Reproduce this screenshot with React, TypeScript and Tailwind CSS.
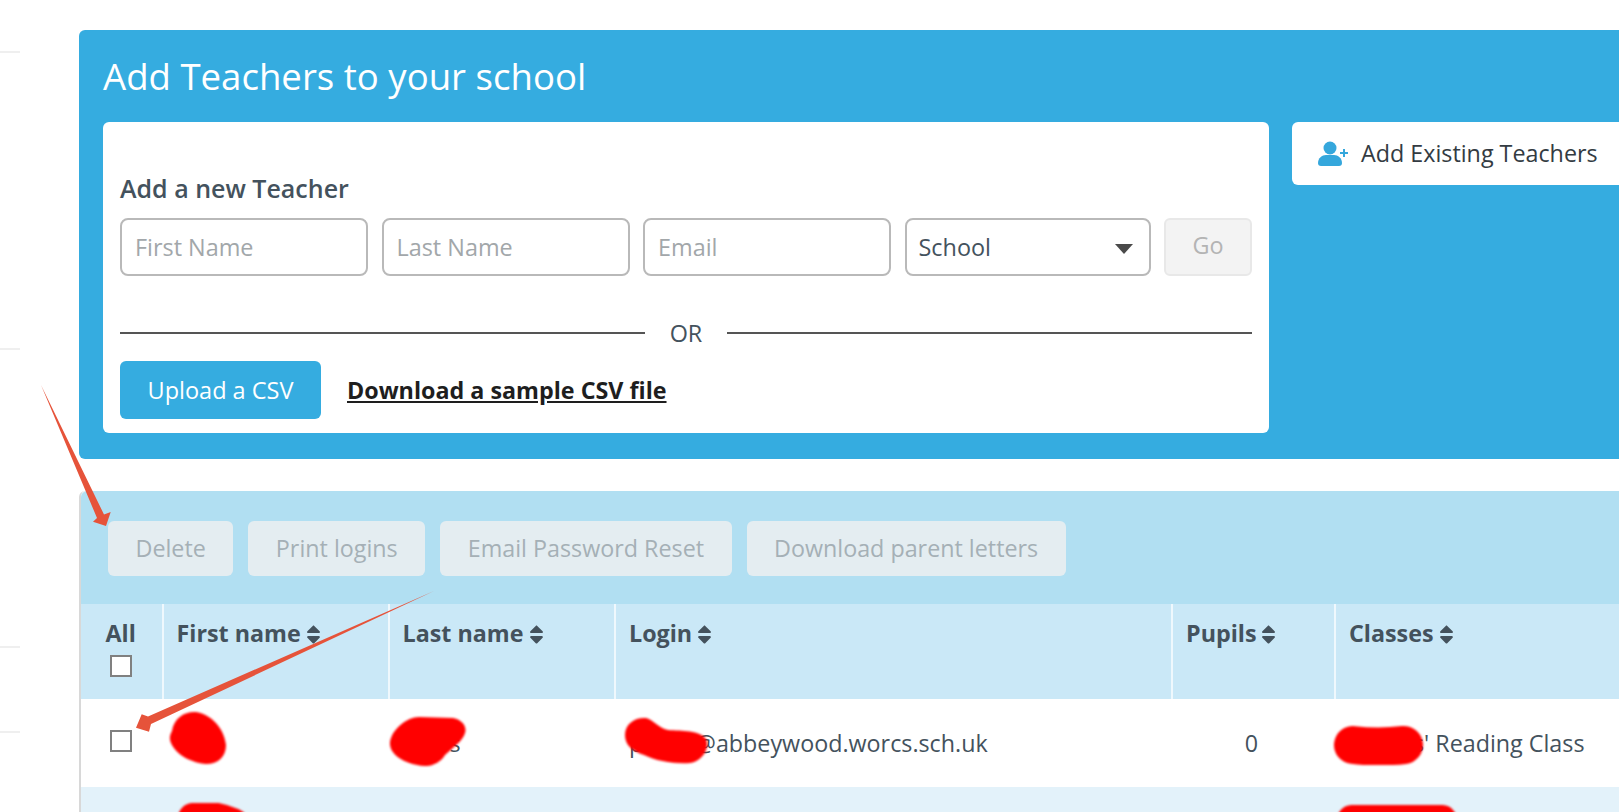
import { FaSort } from "react-icons/fa"

const columns = [
  { label: "First name", width: "w-[226px]" },
  { label: "Last name", width: "w-[226.5px]" },
  { label: "Login", width: "w-[557px]" },
  { label: "Pupils", width: "w-[163px]" },
  { label: "Classes", width: "flex-1" },
]

function TextField({ placeholder }: { placeholder: string }) {
  return (
    <input
      placeholder={placeholder}
      className="h-[58px] w-[248px] rounded-lg border-2 border-[#b9b9b9] bg-white px-[13px] text-[23.4px] outline-none placeholder:text-[#a2a7aa]"
    />
  )
}

function ToolButton({ label }: { label: string }) {
  return (
    <button className="h-[55px] rounded-md bg-[#e4edf1] px-[27.5px] text-[23.3px] text-[#a5b0b6]">
      {label}
    </button>
  )
}

function Checkbox() {
  return <div className="h-[22px] w-[22px] border-2 border-[#808080] bg-white" />
}

// scribbled-out names, drawn on top of the table text
function Blob({ className, d, w, h }: { className: string, d: string, w: number, h: number }) {
  return (
    <svg viewBox={`0 0 ${w} ${h}`} width={w} height={h} className={`absolute blur-[1px] ${className}`}>
      <path d={d} fill="#ff0000" />
    </svg>
  )
}

function Stroke({ className, d, w, h, sw }: { className: string, d: string, w: number, h: number, sw: number }) {
  return (
    <svg viewBox={`0 0 ${w} ${h}`} width={w} height={h} className={`absolute blur-[1px] ${className}`}>
      <path d={d} fill="none" stroke="#ff0000" strokeWidth={sw} strokeLinecap="round" />
    </svg>
  )
}

export default function App() {
  return (
    <div className="relative flex h-screen w-full overflow-hidden bg-white font-['Open_Sans',sans-serif] text-[#44525d]">
      <aside className="w-[20px] shrink-0">
        <div className="mt-[51px] h-[2px] bg-[#efefef]" />
        <div className="mt-[295px] h-[2px] bg-[#efefef]" />
        <div className="mt-[296px] h-[2px] bg-[#efefef]" />
        <div className="mt-[83px] h-[2px] bg-[#efefef]" />
      </aside>

      <main className="ml-[58.5px] w-[1600px] shrink-0 pt-[30px]">
        <section className="rounded-l-md bg-[#35acE0] pb-[26px] pl-[24.5px]">
          <h1 className="flex h-[92px] items-center text-[36.6px] text-white">Add Teachers to your school</h1>
          <div className="flex items-start gap-[23px]">
            <div className="w-[1166px] rounded-md bg-white px-[17px] pt-[48px] pb-[14px]">
              <h2 className="h-[37px] text-[25px] leading-[36px] font-semibold">Add a new Teacher</h2>
              <div className="mt-[11px] flex gap-[13.5px]">
                <TextField placeholder="First Name" />
                <TextField placeholder="Last Name" />
                <TextField placeholder="Email" />
                <div className="flex h-[58px] w-[246px] items-center justify-between rounded-lg border-2 border-[#b9b9b9] pr-[16px] pl-[12px] text-[23.4px]">
                  <span className="pt-[1px]">School</span>
                  <svg viewBox="0 0 18 10" width={18} height={10} className="mt-[3px]">
                    <polygon points="0,0 18,0 9,10" fill="#4a4a4a" />
                  </svg>
                </div>
                <button className="h-[58px] w-[88px] rounded-md border-2 border-[#e8e8e8] bg-[#f3f3f3] pb-[2px] text-[23.4px] text-[#b4b4b4]">Go</button>
              </div>
              <div className="mt-[45px] flex h-[24px] items-center">
                <div className="h-[2px] w-[525px] bg-[#555555]" />
                <span className="w-[82px] pt-[1px] text-center text-[23.4px]">OR</span>
                <div className="h-[2px] flex-1 bg-[#555555]" />
              </div>
              <div className="mt-[16px] flex items-center gap-[26px]">
                <button className="h-[58px] w-[201px] rounded-md bg-[#35acE0] pt-[1px] text-[23.5px] text-white">Upload a CSV</button>
                <a className="pt-[1px] text-[23.3px] font-bold text-[#1e1e1e] underline">Download a sample CSV file</a>
              </div>
            </div>
            <div className="flex h-[63px] flex-1 items-center gap-[12px] rounded-l-md bg-white pl-[26px] text-[23.3px] text-[#333b42]">
              <svg viewBox="0 0 31 25" width={31} height={25} fill="#35a7dc">
                <circle cx="12" cy="7" r="6.5" />
                <path d="M0,22 C0,17 4,14 8,14 L16,14 C20,14 24,17 24,22 C24,24 23,25 21,25 L3,25 C1,25 0,24 0,22Z" />
                <path d="M25,8 h2 v3 h3 v2 h-3 v3 h-2 v-3 h-3 v-2 h3z" />
              </svg>
              Add Existing Teachers
            </div>
          </div>
        </section>

        <section className="mt-[32px] rounded-tl-md border-l-2 border-[#d8d8d8]">
          <div className="flex h-[113px] gap-[15px] rounded-tl-md bg-[#b1dff2] pt-[30px] pl-[27.5px]">
            <ToolButton label="Delete" />
            <ToolButton label="Print logins" />
            <ToolButton label="Email Password Reset" />
            <ToolButton label="Download parent letters" />
          </div>

          <div className="flex h-[95px] bg-[#cae8f7] text-[23.3px] font-bold">
            <div className="flex w-[83px] shrink-0 flex-col items-start border-r-2 border-white/70 pt-[12px] pl-[25px]">
              All
              <div className="mt-[4px] ml-[4.5px]"><Checkbox /></div>
            </div>
            {columns.map((col) => (
              <div key={col.label} className={`flex shrink-0 items-start gap-[5px] border-r-2 border-white/70 pt-[12px] pl-[13px] last:border-r-0 ${col.width}`}>
                {col.label}
                <FaSort className="mt-[7px] h-[23px] w-[15px] text-[#44525d]" />
              </div>
            ))}
          </div>

          <div className="relative flex h-[88px] items-center bg-white text-[23.3px]">
            <div className="w-[83px] shrink-0 pb-[4px] pl-[29.5px]"><Checkbox /></div>
            <div className="w-[226px] shrink-0" />
            <div className="w-[226.5px] shrink-0 pl-[13px]"><span className="inline-block w-[47px]" />s</div>
            <div className="w-[557px] shrink-0 pl-[13px]"><span className="inline-block w-[66px]">p</span>@abbeywood.worcs.sch.uk</div>
            <div className="w-[163px] shrink-0 pr-[78px] text-right">0</div>
            <div className="flex-1 pl-[13px]"><span className="inline-block w-[64px]" />s' Reading Class</div>
            <Blob className="top-[12px] left-[87px]" w={60} h={55} d="M4,20 C6,6 18,0 28,1 C42,3 56,16 58,34 C58,46 50,53 38,53 C24,52 8,44 3,32 C1,27 2,24 4,20Z" />
            <Blob className="top-[16px] left-[308px]" w={80} h={54} d="M1,27 C3,14 18,2 30,2 L64,3 C74,5 78,12 76,18 C74,26 62,34 56,40 C50,50 38,53 28,50 C12,47 0,38 1,27Z" />
            <Blob className="top-[18px] left-[543px]" w={86} h={48} d="M1,18 C1,6 12,0 22,1 C30,3 34,11 44,13 C58,14 76,13 82,22 C86,32 78,44 66,46 C50,47 32,44 20,38 C8,34 1,28 1,18Z" />
            <Stroke className="top-[26px] left-[1253px]" w={89} h={40} sw={38} d="M19,20 C36,22 52,22 70,20" />
          </div>

          <div className="relative h-[30px] overflow-hidden bg-[#e3f2fa]">
            <Stroke className="top-[16px] left-[96px]" w={72} h={30} sw={30} d="M16,15 C30,12 42,14 56,20" />
            <Stroke className="top-[18px] left-[1255px]" w={122} h={30} sw={30} d="M16,15 C40,14 84,14 106,15" />
          </div>
        </section>
      </main>

      <svg viewBox="0 0 1619 812" className="pointer-events-none absolute inset-0 h-[812px] w-[1619px]">
        <polygon points="41,385 104,514.5 110.7,512 106,526 93,521.7 97,518" fill="#e6533a" />
        <polygon points="434,591 148,716.5 141.7,714.3 136,727.7 149,731.7 151,724" fill="#e6533a" />
      </svg>
    </div>
  )
}
